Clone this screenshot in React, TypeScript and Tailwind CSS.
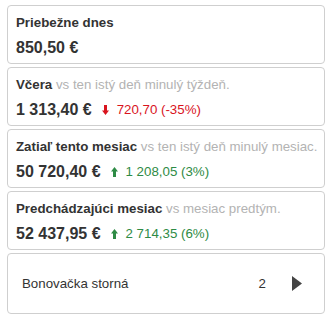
import React from "react";

type Stat = {
  title: string;
  note?: string;
  amount: string;
  diff?: string;
  up?: boolean;
};

const stats: Stat[] = [
  { title: "Priebežne dnes", amount: "850,50 €" },
  { title: "Včera", note: "vs ten istý deň minulý týždeň.", amount: "1 313,40 €", diff: "720,70 (-35%)", up: false },
  { title: "Zatiaľ tento mesiac", note: "vs ten istý deň minulý mesiac.", amount: "50 720,40 €", diff: "1 208,05 (3%)", up: true },
  { title: "Predchádzajúci mesiac", note: "vs mesiac predtým.", amount: "52 437,95 €", diff: "2 714,35 (6%)", up: true },
];

function Arrow({ up }: { up: boolean }) {
  return (
    <svg width="7" height="10" viewBox="0 0 7 10" className={up ? "text-[#2e8b45]" : "text-[#d9141e]"}>
      {up ? (
        <path d="M3.5 0 L7 4.5 L5 4.5 L5 10 L2 10 L2 4.5 L0 4.5 Z" fill="currentColor" />
      ) : (
        <path d="M3.5 10 L7 5.5 L5 5.5 L5 0 L2 0 L2 5.5 L0 5.5 Z" fill="currentColor" />
      )}
    </svg>
  );
}

export default function App() {
  return (
    <div className="flex w-[332px] h-[316px] flex-col gap-[3px] bg-white px-[7px] pt-[5px] font-['Liberation_Sans',Arial,sans-serif] text-[#333]">
      {stats.map((s) => (
        <div key={s.title} className="h-[59px] rounded-[4px] border border-[#cfcfcf] px-[8px] pt-[9px]">
          <div className="whitespace-nowrap text-[13.3px] leading-[16px]">
            <span className="font-bold">{s.title}</span>
            {s.note && <span className="text-[#b3b3b3]"> {s.note}</span>}
          </div>
          <div className="mt-[7px] flex items-center leading-[20px]">
            <span className="text-[16px] font-bold">{s.amount}</span>
            {s.diff && (
              <span className={`ml-[10px] flex items-center gap-[8px] text-[13.3px] ${s.up ? "text-[#2e8b45]" : "text-[#d9141e]"}`}>
                <Arrow up={!!s.up} />
                {s.diff}
              </span>
            )}
          </div>
        </div>
      ))}
      <div className="flex h-[61px] items-center rounded-[4px] border border-[#cfcfcf] pl-[14px] pr-[22px] text-[13.3px]">
        <span className="flex-1">Bonovačka storná</span>
        <span className="mr-[26px]">2</span>
        <svg width="10" height="15" viewBox="0 0 10 15">
          <path d="M0 0 L10 7.5 L0 15 Z" fill="#444" />
        </svg>
      </div>
    </div>
  );
}
